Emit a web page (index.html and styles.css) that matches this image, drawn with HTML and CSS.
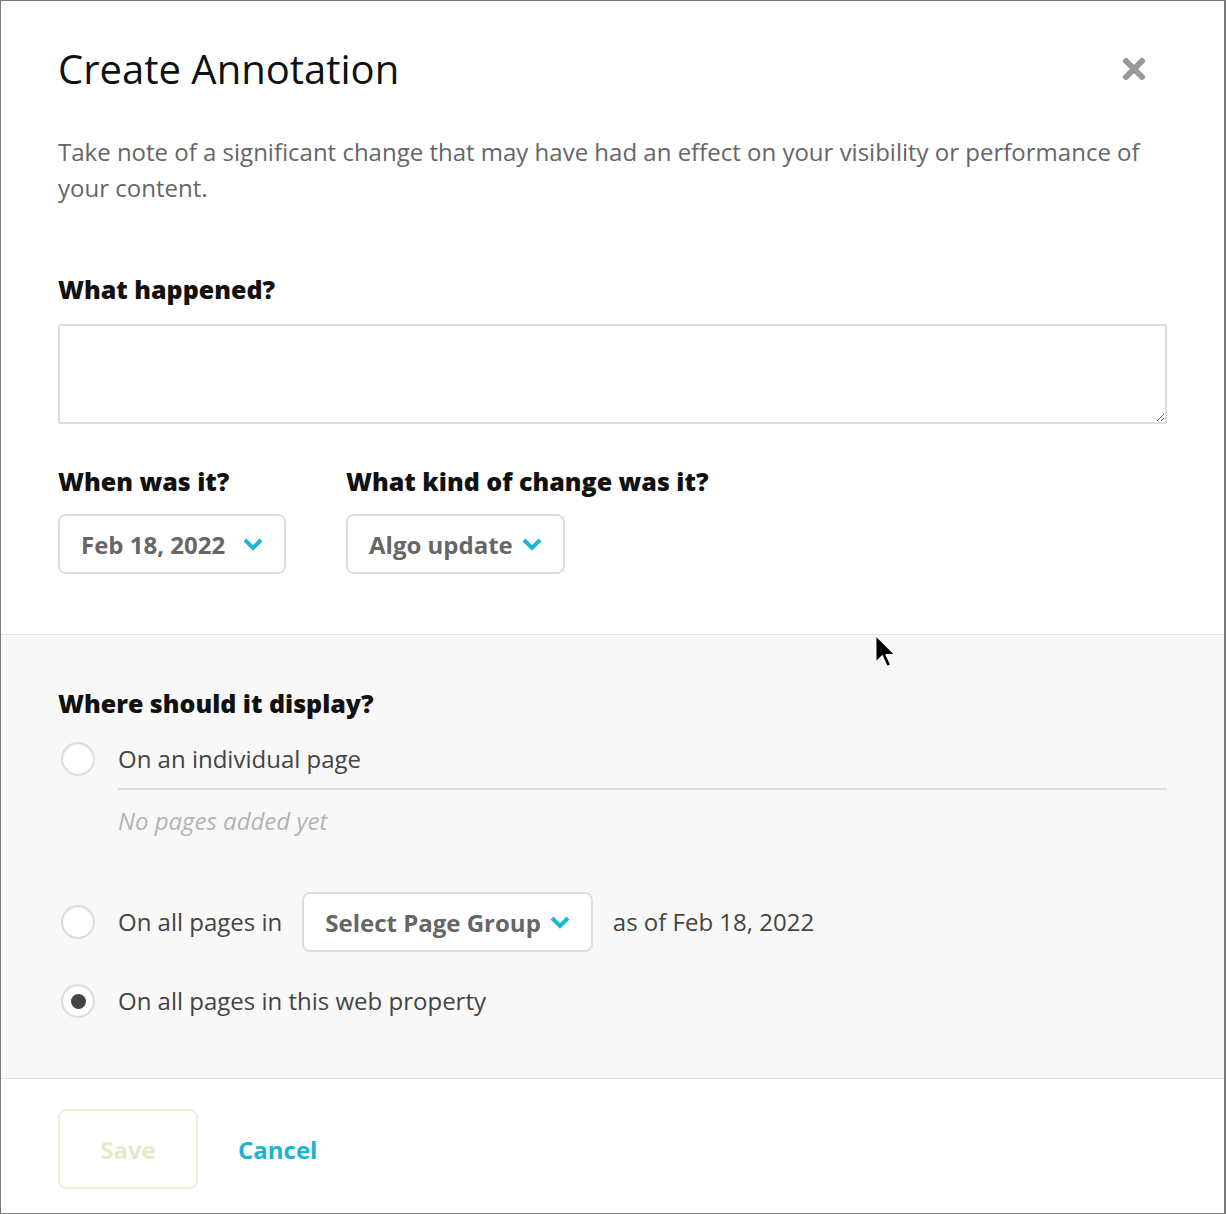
FILE: index.html
```html
<!DOCTYPE html>
<html lang="en">
<head>
    <meta charset="UTF-8">
    <title>Create Annotation</title>
    <link rel="stylesheet" href="styles.css">
</head>
<body>
    <div class="dialog">
        <div class="top">
            <div class="header">
                <h1>Create Annotation</h1>
                <button class="close" aria-label="Close">
                    <svg width="26" height="26" viewBox="0 0 26 26">
                        <path d="M5 5 L21 21 M21 5 L5 21" stroke="#999" stroke-width="6" stroke-linecap="round"/>
                    </svg>
                </button>
            </div>

            <p class="intro">
                Take note of a significant change that may have had an effect on your visibility or performance of
                your content.
            </p>

            <label class="field-label" for="what">What happened?</label>
            <textarea id="what" class="what"></textarea>

            <div class="row">
                <div class="field date-field">
                    <div class="field-label">When was it?</div>
                    <button class="dropdown date">
                        <span>Feb 18, 2022</span>
                        <svg class="chevron" width="22" height="14" viewBox="0 0 22 14"><polyline points="3,3 11,11 19,3" fill="none" stroke="#1bb8d3" stroke-width="4"/></svg>
                    </button>
                </div>
                <div class="field">
                    <div class="field-label">What kind of change was it?</div>
                    <button class="dropdown">
                        <span>Algo update</span>
                        <svg class="chevron" width="22" height="14" viewBox="0 0 22 14"><polyline points="3,3 11,11 19,3" fill="none" stroke="#1bb8d3" stroke-width="4"/></svg>
                    </button>
                </div>
            </div>
        </div>

        <div class="display">
            <div class="field-label">Where should it display?</div>

            <div class="option">
                <span class="radio"></span>
                <span class="option-text">On an individual page</span>
            </div>
            <div class="pages">
                <div class="pages-empty">No pages added yet</div>
            </div>

            <div class="option group">
                <span class="radio"></span>
                <span class="option-text">On all pages in</span>
                <button class="dropdown">
                    <span>Select Page Group</span>
                    <svg class="chevron" width="22" height="14" viewBox="0 0 22 14"><polyline points="3,3 11,11 19,3" fill="none" stroke="#1bb8d3" stroke-width="4"/></svg>
                </button>
                <span class="option-text">as of Feb 18, 2022</span>
            </div>

            <div class="option last">
                <span class="radio checked"></span>
                <span class="option-text">On all pages in this web property</span>
            </div>
        </div>

        <div class="footer">
            <button class="save" disabled>Save</button>
            <a class="cancel" href="#">Cancel</a>
        </div>

        <!-- mouse pointer from the screenshot -->
        <svg class="pointer" width="29" height="38" viewBox="0 0 24 32">
            <path d="M2 1 L2 24 L7.5 18.5 L11.5 27.5 L15 26 L11 17.5 L18.5 17.5 Z" fill="#000" stroke="#fff" stroke-width="1.4" stroke-linejoin="round"/>
        </svg>
    </div>
</body>
</html>
```

FILE: styles.css
```css
body {
    margin: 0;
    font-family: "Open Sans", "Liberation Sans", sans-serif;
    color: #111;
    background: #fff;
}
button {
    font-family: inherit;
}
.dialog {
    position: relative;
    box-sizing: border-box;
    width: 1226px;
    height: 1214px;
    border: 1px solid #7a7a7a;
    border-right-width: 2px;
    background: #fff;
}
.top {
    padding: 42px 57px 60px 57px;
}
.header {
    display: flex;
    justify-content: space-between;
    align-items: center;
}
h1 {
    margin: 0;
    font-size: 40px;
    line-height: 52px;
    font-weight: 400;
    color: #111;
}
.close {
    border: none;
    background: none;
    padding: 0;
    margin-right: 20px;
    cursor: pointer;
    display: flex;
}
.intro {
    margin: 39px 0 0;
    font-size: 24px;
    line-height: 36px;
    color: #666;
}
.field-label {
    display: block;
    font-size: 25px;
    line-height: 30px;
    font-weight: 800;
    color: #111;
}
.top > .field-label {
    margin-top: 68px;
}
.what {
    display: block;
    box-sizing: border-box;
    width: 100%;
    height: 100px;
    margin-top: 20px;
    border: 2px solid #ddd;
    border-radius: 3px;
    font-family: inherit;
    font-size: 20px;
}
.row {
    display: flex;
    gap: 60px;
    margin-top: 42px;
}
.field .field-label {
    margin-bottom: 18px;
}
.dropdown {
    display: inline-flex;
    align-items: center;
    gap: 8px;
    box-sizing: border-box;
    height: 60px;
    padding: 0 20px 0 21px;
    border: 2px solid #ddd;
    border-radius: 8px;
    background: #fff;
    font-size: 24px;
    font-weight: 700;
    color: #666;
    cursor: pointer;
}
.dropdown.date {
    width: 228px;
    justify-content: space-between;
}
.chevron {
    display: block;
}
.display {
    border-top: 1px solid #e3e3e3;
    border-bottom: 1px solid #e3e3e3;
    background: #f8f8f8;
    padding: 53px 57px 60px 57px;
}
.display > .field-label {
    margin-bottom: 24px;
}
.option {
    display: flex;
    align-items: center;
    gap: 20px;
    min-height: 30px;
}
.option-text {
    font-size: 24px;
    line-height: 30px;
    color: #444;
}
.radio {
    box-sizing: border-box;
    width: 34px;
    height: 34px;
    margin: 0 3px;
    border: 2px solid #ddd;
    border-radius: 50%;
    background: #fff;
    box-shadow: inset 0 1px 2px rgba(0, 0, 0, 0.08);
    display: flex;
    align-items: center;
    justify-content: center;
}
.radio.checked::after {
    content: "";
    width: 15px;
    height: 15px;
    border-radius: 50%;
    background: #444;
}
.pages {
    margin: 12px 0 0 60px;
    border-top: 2px solid #ddd;
    padding-top: 16px;
}
.pages-empty {
    font-size: 24px;
    line-height: 30px;
    font-style: italic;
    color: #b3b3b3;
}
.option.group {
    margin-top: 56px;
}
.option.last {
    margin-top: 32px;
}
.footer {
    display: flex;
    align-items: center;
    gap: 40px;
    padding: 30px 57px;
}
.save {
    box-sizing: border-box;
    width: 140px;
    height: 80px;
    border: 2px solid #e6f0d2;
    border-radius: 8px;
    background: #fff;
    font-size: 24px;
    font-weight: 700;
    color: #e0ecc8;
}
.cancel {
    font-size: 24px;
    font-weight: 700;
    color: #17b5cf;
    text-decoration: none;
}
.pointer {
    position: absolute;
    left: 872px;
    top: 633px;
}
```
